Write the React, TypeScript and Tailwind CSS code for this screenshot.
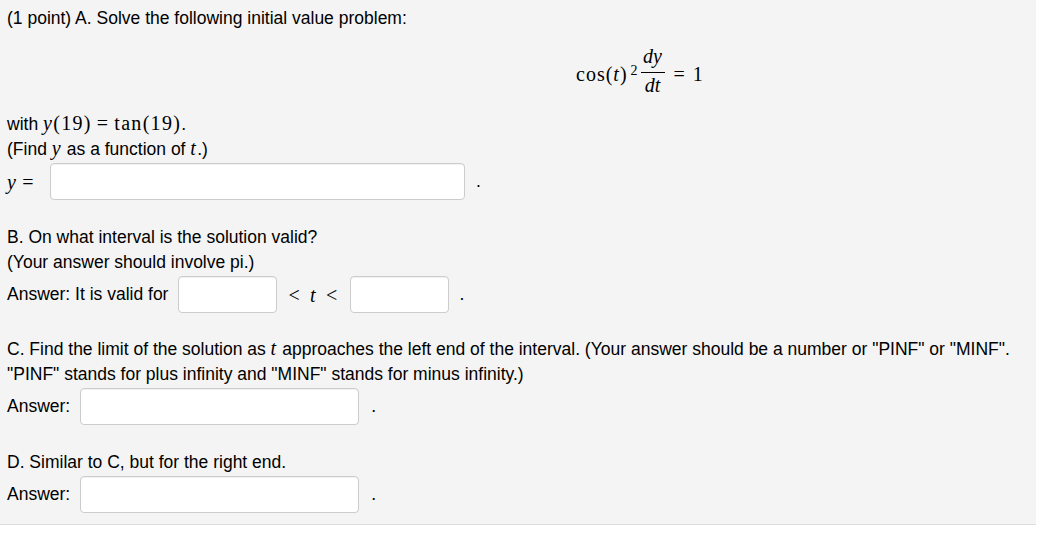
import React from "react";

const serif = "font-['Liberation_Serif',serif] text-[20px] leading-none tracking-[1.3px]";

const M = ({ children }: { children: React.ReactNode }) => <span className={serif}>{children}</span>;
const I = ({ children }: { children: React.ReactNode }) => (
  <span className={`${serif} italic`}>{children}</span>
);
const Eq = () => <span className={`${serif} mx-[5px]`}>=</span>;

const Box = ({ w, ml }: { w: string; ml: string }) => (
  <div
    className={`shrink-0 h-[37px] ${w} ${ml} bg-white border border-[#cccccc] rounded-[4px] shadow-[inset_0_1px_1px_rgba(0,0,0,0.06)]`}
  />
);

export default function App() {
  return (
    <div className="min-h-[543px] bg-white">
      <div className="w-[1036px] bg-[#f4f4f4] border-b border-[#dddddd] pl-[7px] pt-[6px] pb-[11px] text-[17.5px] leading-[25px] text-black font-['Liberation_Sans',Arial,sans-serif]">
        <div className="h-[25px]">(1 point) A. Solve the following initial value problem:</div>

        <div className="h-[81px] pl-[569px] flex items-center">
          <span className="flex items-center font-['Liberation_Serif',serif] text-[20px] leading-none tracking-[1px] pt-[4px]">
            <span>cos(</span>
            <span className="italic">t</span>
            <span>)</span>
            <span className="text-[14px] relative -top-[3px] ml-[3px] tracking-normal">2</span>
            <span className="inline-flex flex-col items-center ml-[3px] tracking-normal">
              <span className="italic pb-[6px] px-[1px]">dy</span>
              <span className="block w-[24px] h-[1px] bg-black"></span>
              <span className="italic pt-[2px] pb-[6px]">dt</span>
            </span>
            <span className="ml-[9px]">=</span>
            <span className="ml-[7px]">1</span>
          </span>
        </div>

        <div className="h-[25px]">
          with <I>y</I>
          <M>(19)</M>
          <Eq />
          <M>tan(19)</M>.
        </div>
        <div className="h-[25px]">
          (Find <I>y</I> as a function of <I>t</I>.)
        </div>
        <div className="mt-[1px] flex items-center h-[37px]">
          <span className="inline-flex w-[43px]">
            <I>y</I>
            <span className={`${serif} ml-[5px]`}>=</span>
          </span>
          <Box w="w-[415px]" ml="" />
          <span className="ml-[11px]">.</span>
        </div>

        <div className="mt-[25px] h-[25px]">B. On what interval is the solution valid?</div>
        <div className="h-[25px]">(Your answer should involve pi.)</div>
        <div className="mt-[1px] flex items-center h-[37px]">
          <span>Answer: It is valid for</span>
          <Box w="w-[99px]" ml="ml-[10px]" />
          <span className={`${serif} ml-[11px] flex items-center`}>
            <span>&lt;</span>
            <span className="italic ml-[9px]">t</span>
            <span className="ml-[9px]">&lt;</span>
          </span>
          <Box w="w-[99px]" ml="ml-[11px]" />
          <span className="ml-[11px]">.</span>
        </div>

        <div className="mt-[24px] h-[25px]">
          C. Find the limit of the solution as <I>t</I> approaches the left end of the interval. (Your answer should be a
          number or "PINF" or "MINF".
        </div>
        <div className="h-[25px]">"PINF" stands for plus infinity and "MINF" stands for minus infinity.)</div>
        <div className="mt-[1px] flex items-center h-[37px]">
          <span>Answer:</span>
          <Box w="w-[279px]" ml="ml-[10px]" />
          <span className="ml-[12px]">.</span>
        </div>

        <div className="mt-[25px] h-[25px]">D. Similar to C, but for the right end.</div>
        <div className="mt-[1px] flex items-center h-[37px]">
          <span>Answer:</span>
          <Box w="w-[279px]" ml="ml-[10px]" />
          <span className="ml-[12px]">.</span>
        </div>
      </div>
    </div>
  );
}
